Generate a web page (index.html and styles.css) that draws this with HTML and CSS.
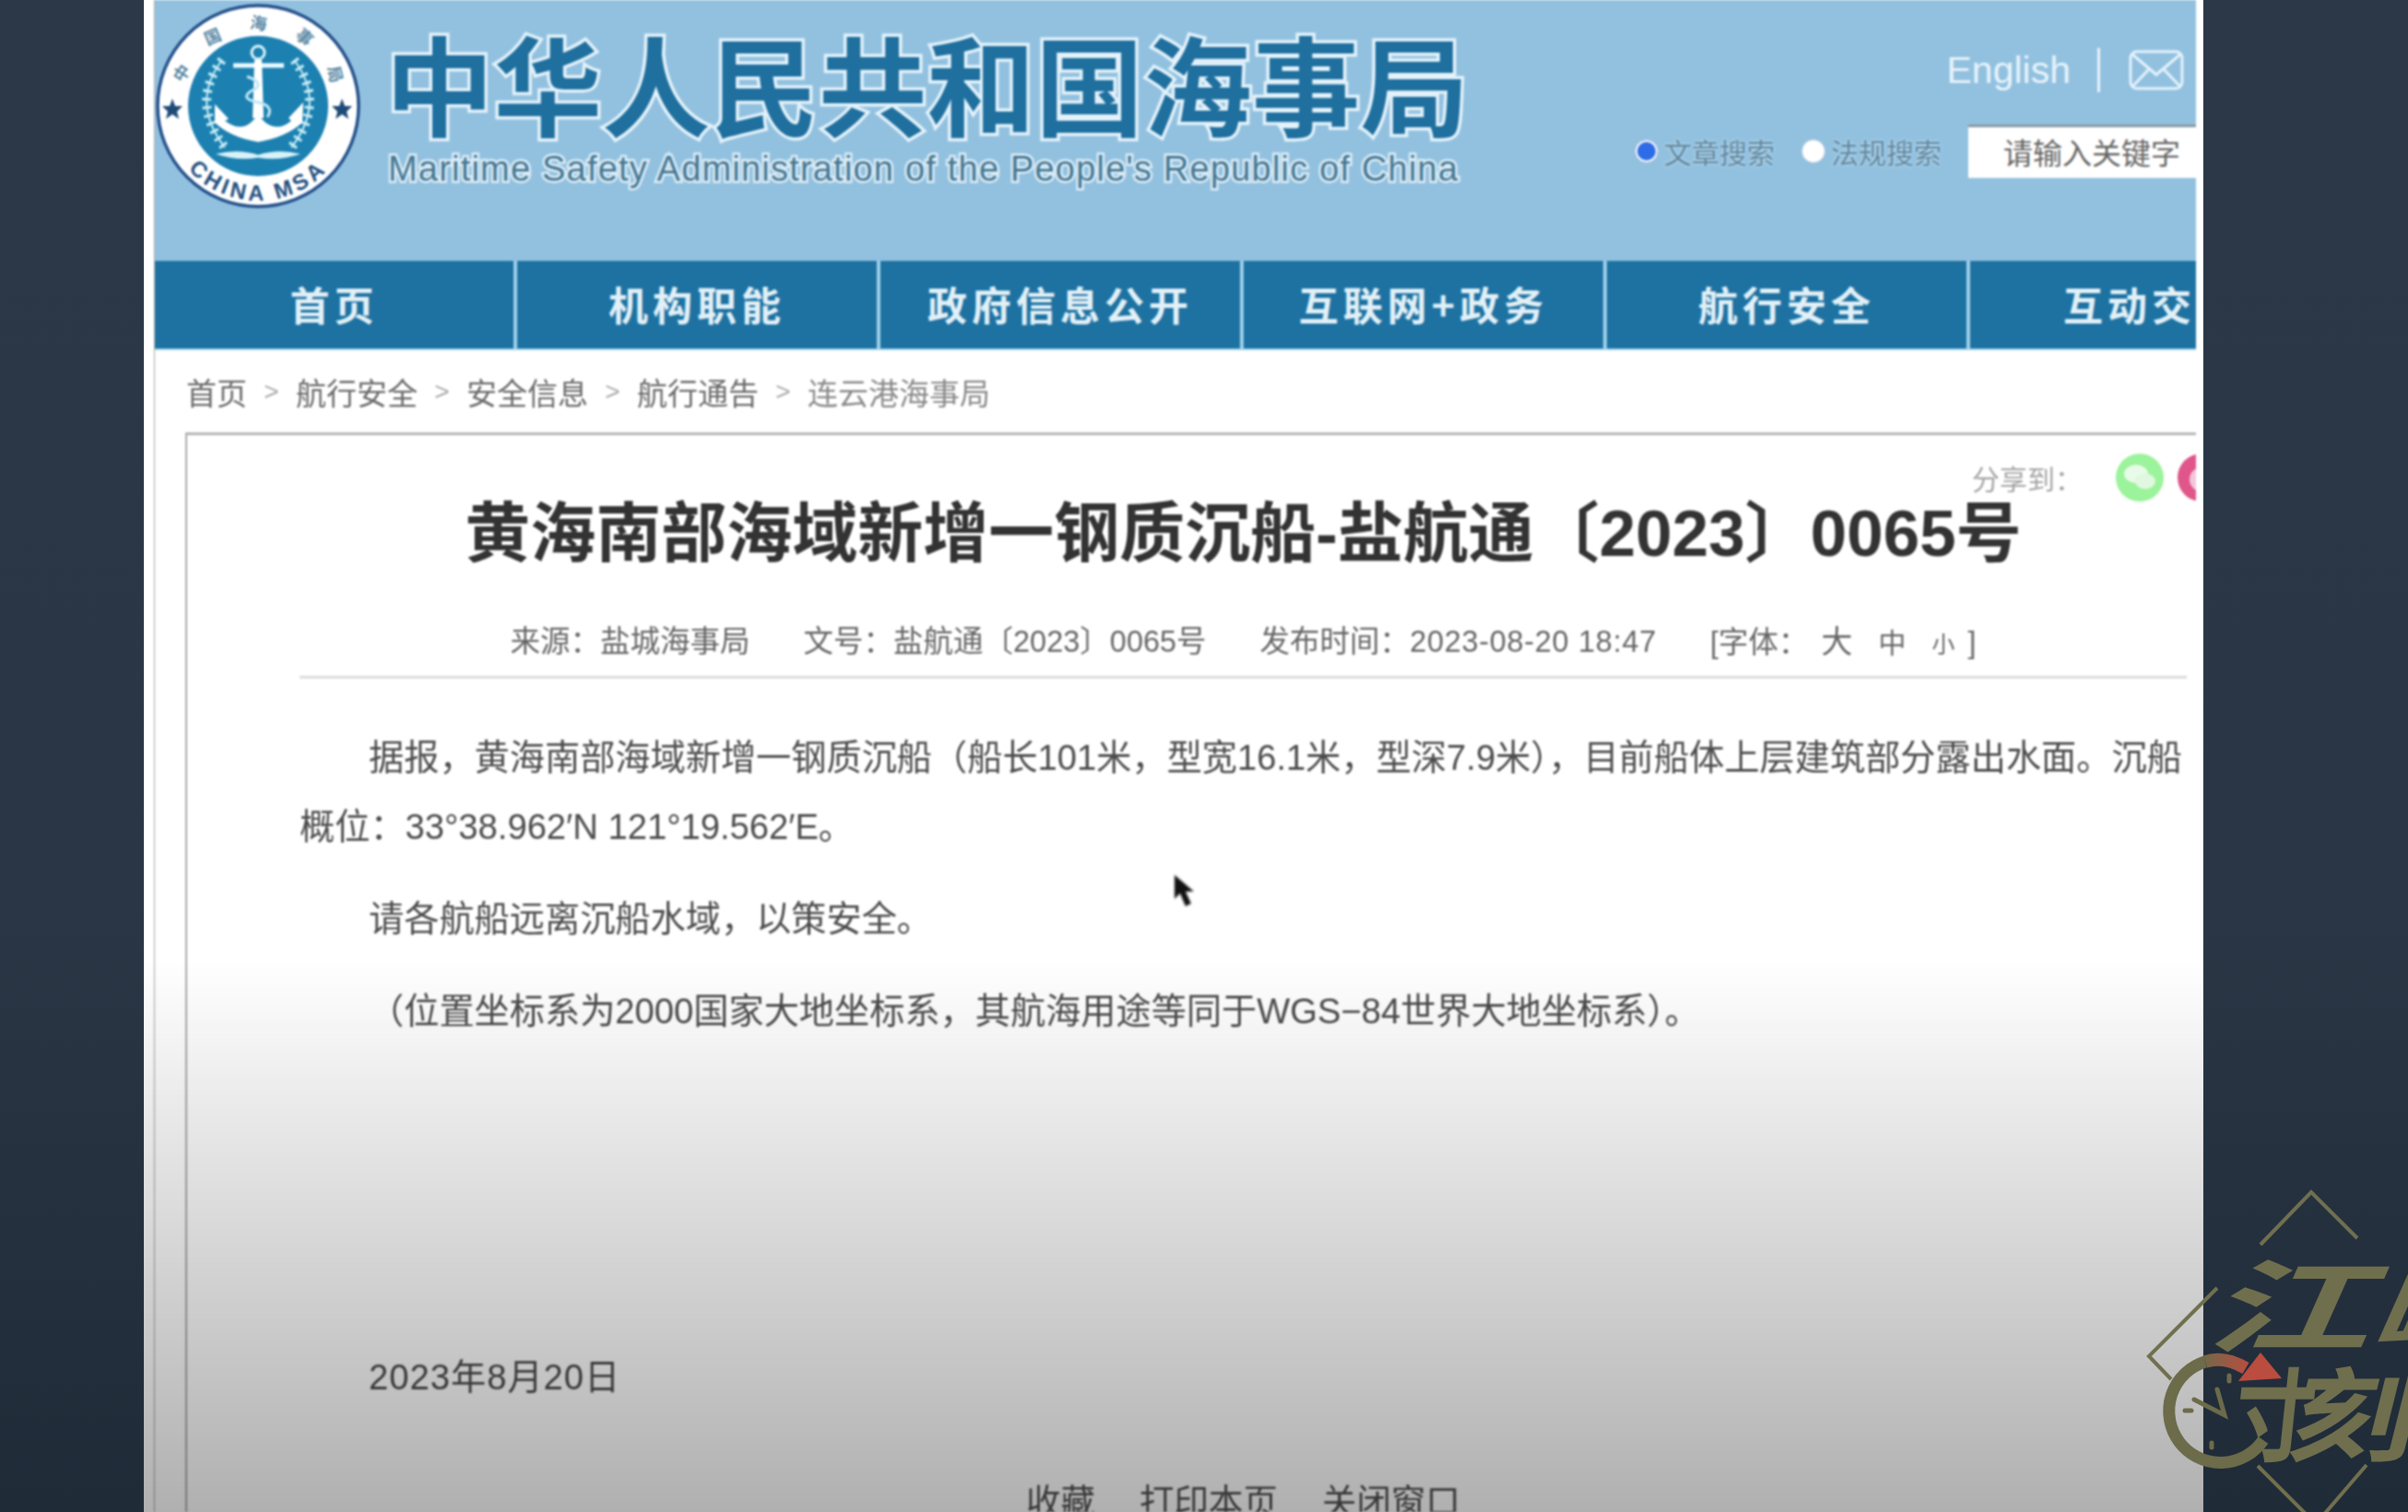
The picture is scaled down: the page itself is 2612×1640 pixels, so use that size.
FILE: index.html
```html
<!DOCTYPE html>
<html lang="zh-CN">
<head>
<meta charset="utf-8">
<title>黄海南部海域新增一钢质沉船-盐航通〔2023〕0065号</title>
<link rel="stylesheet" href="styles.css">
</head>
<body>
<main class="sheet">
  <div class="frame">
    <header class="masthead">
      <svg class="logo" width="225" height="225" viewBox="0 0 225 225">
        <defs>
          <path id="arcTop" d="M30 126 A83 83 0 1 1 194 126"/>
          <path id="arcBottom" d="M16 147 A102 102 0 0 0 208 147"/>
        </defs>
        <circle cx="112" cy="112" r="109" fill="#fff" stroke="#23508a" stroke-width="3.5"/>
        <circle cx="112" cy="112" r="76" fill="#1c81b1"/>
        <text class="logo-cn"><textPath href="#arcTop" startOffset="55%" text-anchor="middle">中国海事局</textPath></text>
        <text class="logo-en"><textPath href="#arcBottom" startOffset="50%" text-anchor="middle">CHINA MSA</textPath></text>
        <polygon points="19,104 22,112 30,112 24,118 26,126 19,121 12,126 14,118 8,112 16,112" fill="#1e4a78"/>
        <polygon points="203,104 206,112 214,112 208,118 210,126 203,121 196,126 198,118 192,112 200,112" fill="#1e4a78"/>
        <path d="M73 62 Q38 108 76 157 M151 62 Q186 108 148 157" fill="none" stroke="#c6ecf6" stroke-width="10" stroke-dasharray="3 6"/>
        <path d="M73 62 Q38 108 76 157 M151 62 Q186 108 148 157" fill="none" stroke="#c6ecf6" stroke-width="2"/>
        <path d="M66 164 Q90 158 112 165 Q134 158 158 164 Q134 172 112 168 Q90 172 66 164Z" fill="#d8f2f8"/>
        <path d="M85 68 H140" stroke="#eafaff" stroke-width="5"/>
        <circle cx="112" cy="54" r="7" fill="none" stroke="#d6f2f8" stroke-width="3"/>
        <path d="M108 62 H116 L118 125 L106 125Z" fill="#fff"/>
        <path d="M100 80 Q122 88 104 96 Q92 104 112 108 Q130 112 122 124" fill="none" stroke="#bfe8f5" stroke-width="3"/>
        <path d="M65 110 L80 126 L76 128 Q92 140 104 130 L112 122 L120 130 Q134 140 148 128 L145 125 L161 108 L160 130 Q142 146 112 151 Q82 146 65 130Z" fill="#fff"/>
      </svg>
      <div class="brand">
        <div class="brand-cn">中华人民共和国海事局</div>
        <div class="brand-en">Maritime Safety Administration of the People's Republic of China</div>
      </div>
      <div class="tools">
        <div class="tools-top">
          <span class="lang">English</span>
          <span class="divider"></span>
          <svg width="60" height="44" viewBox="0 0 60 44" fill="none" stroke="#e4f2fb" stroke-width="3">
            <rect x="2" y="2" width="56" height="40" rx="7"/>
            <path d="M4 5 L30 27 L56 5 M4 40 L22 21 M56 40 L38 21"/>
          </svg>
        </div>
        <div class="search">
          <span class="radio radio-on"></span><span class="search-label">文章搜索</span>
          <span class="radio"></span><span class="search-label">法规搜索</span>
          <div class="keyword">请输入关键字</div>
        </div>
      </div>
    </header>

    <nav class="nav">
      <a class="nav-item nav-first">首页</a>
      <a class="nav-item">机构职能</a>
      <a class="nav-item">政府信息公开</a>
      <a class="nav-item">互联网+政务</a>
      <a class="nav-item">航行安全</a>
      <a class="nav-item nav-last">互动交</a>
    </nav>

    <div class="crumbs">
      <span>首页</span><i>&gt;</i><span>航行安全</span><i>&gt;</i><span>安全信息</span><i>&gt;</i><span>航行通告</span><i>&gt;</i><span class="crumb-current">连云港海事局</span>
    </div>

    <article class="box">
      <div class="share">
        <span class="share-label">分享到&#xFF1A;</span>
        <span class="share-icon share-wechat">
          <svg width="52" height="52" viewBox="0 0 52 52"><ellipse cx="22" cy="22" rx="13" ry="10" fill="#e8fbe8"/><ellipse cx="32" cy="30" rx="11" ry="8.5" fill="#dff8df"/></svg>
        </span>
        <span class="share-icon share-weibo">
          <svg width="52" height="52" viewBox="0 0 52 52"><circle cx="26" cy="28" r="13" fill="#f3c7d8"/><circle cx="26" cy="28" r="6" fill="#e0558a"/></svg>
        </span>
      </div>
      <h1 class="title">黄海南部海域新增一钢质沉船-盐航通〔2023〕0065号</h1>
      <div class="meta">
        <span>来源&#xFF1A;盐城海事局</span>
        <span>文号&#xFF1A;盐航通〔2023〕0065号</span>
        <span>发布时间&#xFF1A;<span class="meta-date">2023-08-20 18:47</span></span>
        <span class="fontsize">[字体&#xFF1A;<b class="fs-l">大</b><b class="fs-m">中</b><b class="fs-s">小</b>]</span>
      </div>
      <div class="body">
        <p>据报&#xFF0C;黄海南部海域新增一钢质沉船&#xFF08;船长101米&#xFF0C;型宽16.1米&#xFF0C;型深7.9米&#xFF09;&#xFF0C;目前船体上层建筑部分露出水面。沉船概位&#xFF1A;33°38.962′N 121°19.562′E。</p>
        <p>请各航船远离沉船水域&#xFF0C;以策安全。</p>
        <p>&#xFF08;位置坐标系为2000国家大地坐标系&#xFF0C;其航海用途等同于WGS−84世界大地坐标系&#xFF09;。</p>
        <p class="date">2023年8月20日</p>
      </div>
      <div class="actions">
        <span>收藏</span><span>打印本页</span><span>关闭窗口</span>
      </div>
    </article>
  </div>
  <div class="shade"></div>
</main>

<svg class="cursor" width="26" height="40" viewBox="0 0 26 40">
  <path d="M2 1 L2 27 L8 21 L14 35 L20 32 L14 19 L23 19Z" fill="#111"/>
</svg>

<svg class="watermark" width="300" height="360" viewBox="0 0 300 360">
  <defs>
    <linearGradient id="ringFade" gradientUnits="userSpaceOnUse" x1="72" y1="200" x2="130" y2="205">
      <stop offset="0" stop-color="#6c6b4a"/>
      <stop offset="1" stop-color="#bb4c40"/>
    </linearGradient>
  </defs>
  <g fill="none" stroke="#70704f" stroke-width="4">
    <path d="M140 70 L195 13 L245 63"/>
    <path d="M93 117 L19 191 L43 216"/>
    <path d="M137 310 L200 373 L255 309"/>
  </g>
  <text class="wm-text" transform="translate(78 178) skewX(-24) scale(1.62 1)">江峰</text>
  <text class="wm-text" transform="translate(108 296) skewX(-6) scale(0.8 1)">寸</text>
  <text class="wm-text" transform="translate(166 296) skewX(-14) scale(1.25 1)">刻</text>
  <g fill="none" stroke-width="13">
    <path d="M143 282 A56 56 0 1 1 80 197" stroke="#6c6b4a"/>
    <path d="M80 197 Q100 190 124 204" stroke="url(#ringFade)" stroke-width="14"/>
  </g>
  <polygon points="140,187 163,215 116,218" fill="#bb4c40"/>
  <g stroke="#6c6b4a" stroke-width="5" stroke-linecap="round" fill="none">
    <path d="M68 238 L101 255 L93 227"/>
    <path d="M58 250 H65"/>
    <path d="M106 212 V218"/>
    <path d="M87 285 V290"/>
  </g>
</svg>
</body>
</html>
```

FILE: styles.css
```css
* { box-sizing: border-box; }
html, body { margin: 0; padding: 0; }
body {
  position: relative;
  width: 2612px;
  height: 1640px;
  overflow: hidden;
  background: linear-gradient(180deg, #2c3848 0%, #2a3645 60%, #202b38 100%);
  font-family: "Liberation Sans", "Noto Sans CJK SC", sans-serif;
}
.sheet {
  position: relative;
  width: 2234px;
  height: 1640px;
  margin-left: 156px;
  padding: 0 8px 0 11px;
  background: #fff;
  overflow: hidden;
}
.frame {
  width: 2215px;
  height: 1640px;
  overflow: hidden;
  border-left: 1px solid #a9a9a9;
  filter: blur(1px);
}
.shade {
  position: absolute;
  left: 0;
  right: 0;
  top: 1040px;
  bottom: 0;
  background: linear-gradient(180deg, rgba(0,0,0,0) 0%, rgba(0,0,0,.31) 100%);
  pointer-events: none;
}

/* masthead */
.masthead {
  display: flex;
  height: 283px;
  background: #92c1e0;
}
.logo { flex: none; margin-top: 3px; }
.logo-cn { font: 700 18px "Noto Sans CJK SC", sans-serif; fill: #5b89a6; letter-spacing: 30px; }
.logo-en { font: 700 24px "Liberation Sans", sans-serif; fill: #23507f; letter-spacing: 4px; }
.brand { flex: none; width: 1200px; margin-left: 25px; padding-top: 28px; }
.brand-cn {
  font: 700 117.5px/120px "Noto Sans CJK SC", sans-serif;
  color: #1f6f9f;
  -webkit-text-stroke: 7px #e3f2fa;
  paint-order: stroke fill;
  white-space: nowrap;
}
.brand-en {
  margin: 13px 0 0 3px;
  font: 400 38px/44px "Liberation Sans", sans-serif;
  letter-spacing: 1.2px;
  color: #457793;
  -webkit-text-stroke: 5px #dcedf7;
  paint-order: stroke fill;
  white-space: nowrap;
}
.tools {
  flex: none;
  margin-left: auto;
  display: flex;
  flex-direction: column;
  align-items: flex-end;
  padding-top: 52px;
}
.tools-top {
  display: flex;
  align-items: center;
  height: 48px;
  margin-right: 13px;
}
.lang { font-size: 41px; color: #e6f3fb; }
.divider { width: 3px; height: 48px; margin: 0 31px 0 29px; background: #e6f3fb; }
.search { display: flex; align-items: center; margin-top: 35px; }
.radio {
  flex: none;
  width: 26px;
  height: 26px;
  margin-right: 6px;
  border-radius: 50%;
  border: 1px solid #b3c9da;
  background: #fff;
}
.radio-on { background: #2d6ce6; box-shadow: inset 0 0 0 2px #fff; }
.search-label {
  width: 120px;
  margin-right: 29px;
  font: 400 30px/40px "Noto Sans CJK SC", sans-serif;
  color: #5f879f;
  text-shadow: 0 0 3px #d8ecf7;
  white-space: nowrap;
}
.keyword {
  width: 247px;
  height: 58px;
  padding-left: 38px;
  background: #fff;
  border-top: 3px solid #8b9aa5;
  font: 400 32px/52px "Noto Sans CJK SC", sans-serif;
  color: #666;
  white-space: nowrap;
}

/* nav */
.nav {
  display: flex;
  height: 97px;
  border-bottom: 2px solid #a9d8ee;
  background: #1d72a2;
  overflow: hidden;
}
.nav-item {
  flex: none;
  width: 394px;
  border-right: 4px solid #9fcfe8;
  font: 700 43px/93px "Noto Sans CJK SC", sans-serif;
  letter-spacing: 5px;
  color: #e2f0f7;
  text-align: center;
  white-space: nowrap;
}
.nav-first { width: 393px; }
.nav-last { border-right: 0; text-align: left; padding-left: 101px; }

/* breadcrumb */
.crumbs {
  display: flex;
  align-items: center;
  height: 89px;
  padding-left: 34px;
  font: 400 33px/46px "Noto Sans CJK SC", sans-serif;
  color: #6a6a6a;
}
.crumbs i {
  width: 53px;
  font: 400 28px/46px "Liberation Sans", sans-serif;
  color: #aaa;
  text-align: center;
}
.crumb-current { color: #8a8a8a; }

/* article */
.box {
  margin-left: 33px;
  height: 1300px;
  padding: 20px 10px 0 122px;
  border-top: 3px solid #b5b5b5;
  border-left: 2px solid #aaa;
}
.share {
  display: flex;
  justify-content: flex-end;
  align-items: center;
  height: 52px;
  margin-right: -42px;
}
.share-label {
  margin-right: 36px;
  font: 400 30px/40px "Noto Sans CJK SC", sans-serif;
  color: #a4a4a4;
}
.share-icon { flex: none; width: 52px; height: 52px; border-radius: 50%; }
.share-wechat { background: #9bf39b; margin-right: 15px; }
.share-weibo { background: #e0558a; }
.title {
  margin: 0;
  font: 700 71px/70px "Liberation Sans", "Noto Sans CJK SC", sans-serif;
  color: #333;
  text-align: center;
  white-space: nowrap;
}
.meta {
  display: flex;
  justify-content: center;
  gap: 58px;
  margin-top: 57px;
  padding-bottom: 9px;
  border-bottom: 3px solid #dcdcdc;
  font: 400 32.5px/50px "Liberation Sans", "Noto Sans CJK SC", sans-serif;
  color: #666;
  white-space: nowrap;
}
.meta-date { letter-spacing: .7px; }
.fontsize b { font-weight: 400; margin: 0 14px; }
.fs-l { font-size: 34px; }
.fs-m { font-size: 30px; }
.fs-s { font-size: 25px; }
.body { margin-top: 48px; }
.body p {
  margin: 0 0 25px;
  font: 400 38.2px/75px "Liberation Sans", "Noto Sans CJK SC", sans-serif;
  color: #4c4c4c;
  text-indent: 75px;
}
.body .date { margin: 322px 0 0; letter-spacing: 1px; }
.actions {
  display: flex;
  justify-content: center;
  gap: 48px;
  margin-top: 75px;
  font: 400 37.5px/40px "Noto Sans CJK SC", sans-serif;
  color: #505050;
}

/* overlays */
.cursor { position: absolute; left: 1272px; top: 948px; filter: blur(1.5px); }
.watermark { position: absolute; left: 2312px; top: 1280px; }
.wm-text { font: 700 110px "Noto Sans CJK SC", sans-serif; fill: #6f6f4e; }
```
